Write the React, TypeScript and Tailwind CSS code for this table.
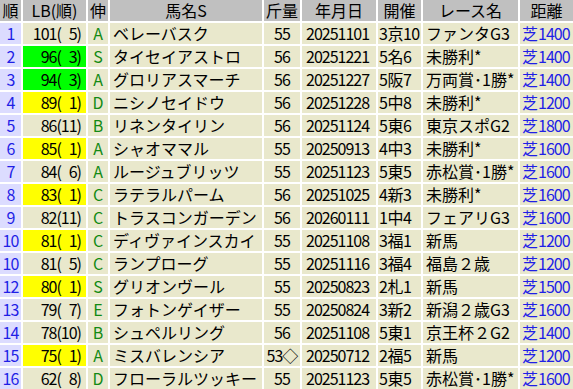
import React from "react";

type Row = {
  rank: string;
  lb: string;
  rk: string;
  hl?: "g" | "y";
  nob: string;
  name: string;
  kin: string;
  date: string;
  kaisai: string;
  race: string;
  dist: string;
};

const rows: Row[] = [
  { rank: "1", lb: "101", rk: "\u20075", nob: "A", name: "ベレーバスク", kin: "55", date: "20251101", kaisai: "3京10", race: "ファンタG3", dist: "1400" },
  { rank: "2", lb: "96", rk: "\u20073", hl: "g", nob: "S", name: "タイセイアストロ", kin: "56", date: "20251221", kaisai: "5名6", race: "未勝利*", dist: "1400" },
  { rank: "3", lb: "94", rk: "\u20073", hl: "g", nob: "A", name: "グロリアスマーチ", kin: "56", date: "20251227", kaisai: "5阪7", race: "万両賞･1勝*", dist: "1400" },
  { rank: "4", lb: "89", rk: "\u20071", hl: "y", nob: "D", name: "ニシノセイドウ", kin: "56", date: "20251228", kaisai: "5中8", race: "未勝利*", dist: "1200" },
  { rank: "5", lb: "86", rk: "11", nob: "B", name: "リネンタイリン", kin: "56", date: "20251124", kaisai: "5東6", race: "東京スポG2", dist: "1800" },
  { rank: "6", lb: "85", rk: "\u20071", hl: "y", nob: "A", name: "シャオママル", kin: "55", date: "20250913", kaisai: "4中3", race: "未勝利*", dist: "1600" },
  { rank: "7", lb: "84", rk: "\u20076", nob: "A", name: "ルージュブリッツ", kin: "55", date: "20251123", kaisai: "5東5", race: "赤松賞･1勝*", dist: "1600" },
  { rank: "8", lb: "83", rk: "\u20071", hl: "y", nob: "C", name: "ラテラルパーム", kin: "56", date: "20251025", kaisai: "4新3", race: "未勝利*", dist: "1600" },
  { rank: "9", lb: "82", rk: "11", nob: "C", name: "トラスコンガーデン", kin: "56", date: "20260111", kaisai: "1中4", race: "フェアリG3", dist: "1600" },
  { rank: "10", lb: "81", rk: "\u20071", hl: "y", nob: "C", name: "ディヴァインスカイ", kin: "55", date: "20251108", kaisai: "3福1", race: "新馬", dist: "1200" },
  { rank: "10", lb: "81", rk: "\u20075", nob: "C", name: "ランプローグ", kin: "55", date: "20251116", kaisai: "3福4", race: "福島２歳", dist: "1200" },
  { rank: "12", lb: "80", rk: "\u20071", hl: "y", nob: "S", name: "グリオンヴール", kin: "55", date: "20250823", kaisai: "2札1", race: "新馬", dist: "1500" },
  { rank: "13", lb: "79", rk: "\u20077", nob: "E", name: "フォトンゲイザー", kin: "55", date: "20250824", kaisai: "3新2", race: "新潟２歳G3", dist: "1600" },
  { rank: "14", lb: "78", rk: "10", nob: "B", name: "シュペルリング", kin: "56", date: "20251108", kaisai: "5東1", race: "京王杯２G2", dist: "1400" },
  { rank: "15", lb: "75", rk: "\u20071", hl: "y", nob: "A", name: "ミスバレンシア", kin: "53◇", date: "20250712", kaisai: "2福5", race: "新馬", dist: "1200" },
  { rank: "16", lb: "62", rk: "\u20078", nob: "D", name: "フローラルツッキー", kin: "55", date: "20251123", kaisai: "5東5", race: "赤松賞･1勝*", dist: "1600" },
];

const headers = ["順", "LB(順)", "伸", "馬名S", "斤量", "年月日", "開催", "レース名", "距離"];

export default function App() {
  return (
    <div
      className="w-[573px] h-[389px] overflow-hidden bg-white text-[16px] leading-[21px] text-black"
      style={{ fontFamily: '"Noto Sans CJK JP", sans-serif' }}
    >
      <div className="grid grid-cols-[21px_63px_20px_152px_36px_74px_43px_95px_53px] gap-[2px] auto-rows-[21px]">
        {headers.map((h, i) => (
          <div key={i} className="bg-[#c0c0c0] text-center whitespace-nowrap">
            {h}
          </div>
        ))}
        {rows.map((r, i) => (
          <React.Fragment key={i}>
            <div className="bg-[#dcdcff] text-[#1f1fe6] text-center tracking-[-1px] whitespace-nowrap">{r.rank}</div>
            <div
              className={
                "text-right pr-[5px] whitespace-pre tracking-[-1px] " +
                (r.hl === "g" ? "bg-[#00ff00]" : r.hl === "y" ? "bg-[#ffff00]" : "bg-[#e9e8cc]")
              }
            >
              {r.lb}({r.rk})
            </div>
            <div className="bg-[#e9e8cc] text-[#138a13] text-center">{r.nob}</div>
            <div className="bg-[#e9e8cc] pl-[3px] whitespace-nowrap">{r.name}</div>
            <div className="bg-[#e9e8cc] text-center whitespace-nowrap tracking-[-1px]">{r.kin}</div>
            <div className="bg-[#e9e8cc] pl-[4px] tracking-[-1px]">{r.date}</div>
            <div className="bg-[#e9e8cc] pl-[1px] whitespace-nowrap tracking-[-0.5px]">{r.kaisai}</div>
            <div className="bg-[#e9e8cc] pl-[3px] whitespace-nowrap">{r.race}</div>
            <div className="bg-[#e9e8cc] text-[#1f1fe6] pl-[2px] whitespace-nowrap">
              芝<span className="tracking-[-1px]">{r.dist}</span>
            </div>
          </React.Fragment>
        ))}
      </div>
    </div>
  );
}
